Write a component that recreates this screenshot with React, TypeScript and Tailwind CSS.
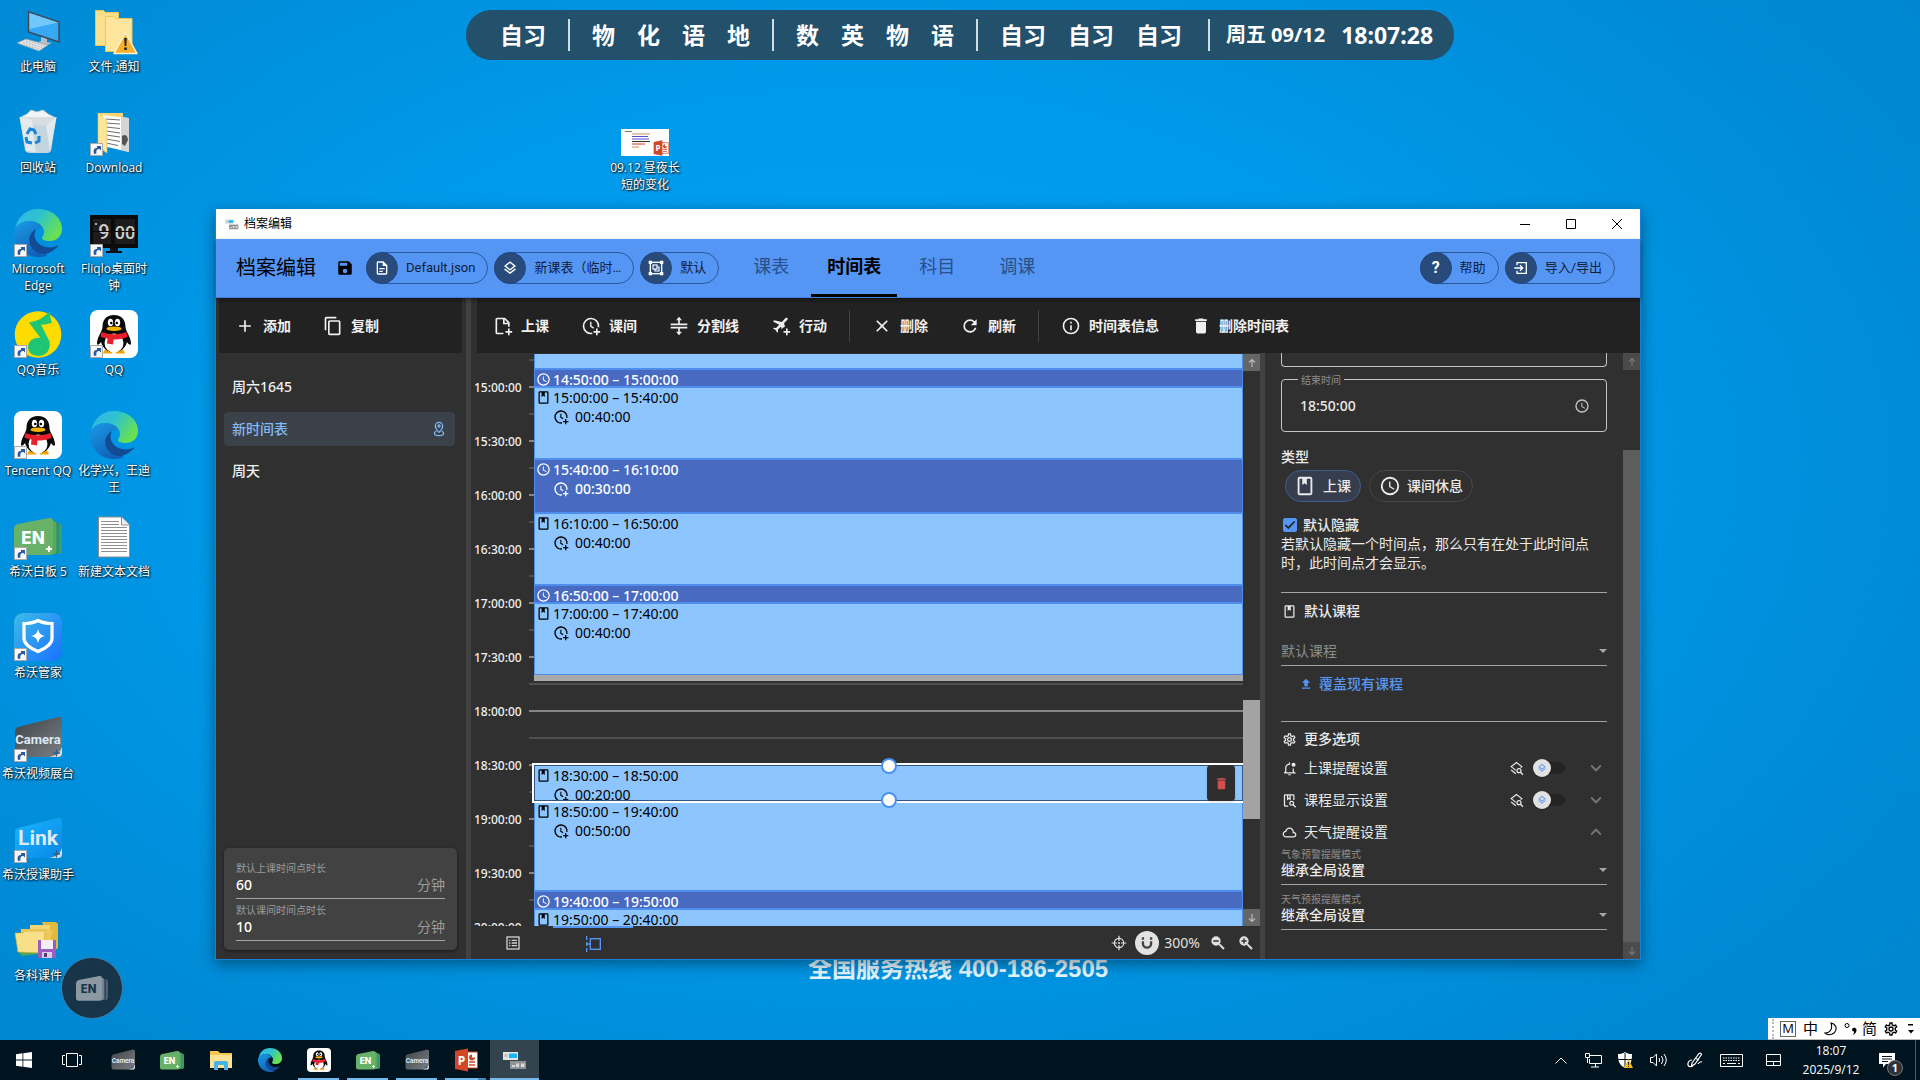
import React, { useState } from "react";

const UI_FONT = "font-['Noto_Sans','Noto_Sans_CJK_SC',sans-serif]";
const SYS_FONT = "font-['Open_Sans','Noto_Sans_CJK_SC',sans-serif]";

/* ---------- line icons ---------- */

const PATHS = {
  plus: "M19,13H13V19H11V13H5V11H11V5H13V11H19V13Z",
  copy: "M19,21H8V7H19M19,5H8A2,2 0 0,0 6,7V21A2,2 0 0,0 8,23H19A2,2 0 0,0 21,21V7A2,2 0 0,0 19,5M16,1H4A2,2 0 0,0 2,3V17H4V3H16V1Z",
  file: "M6,2A2,2 0 0,0 4,4V20A2,2 0 0,0 6,22H18A2,2 0 0,0 20,20V8L14,2H6M6,4H13V9H18V20H6V4M8,12V14H16V12H8M8,16V18H13V16H8Z",
  layers:
    "M12,18.54L19.37,12.8L21,14.07L12,21.07L3,14.07L4.62,12.81L12,18.54M12,16L3,9L12,2L21,9L12,16M12,4.53L6.26,9L12,13.47L17.74,9L12,4.53Z",
  clock:
    "M12,20A8,8 0 0,0 20,12A8,8 0 0,0 12,4A8,8 0 0,0 4,12A8,8 0 0,0 12,20M12,2A10,10 0 0,1 22,12A10,10 0 0,1 12,22C6.47,22 2,17.5 2,12A10,10 0 0,1 12,2M12.5,7V12.25L17,14.92L16.25,16.15L11,13V7H12.5Z",
  save: "M15,9H5V5H15M12,19A3,3 0 0,1 9,16A3,3 0 0,1 12,13A3,3 0 0,1 15,16A3,3 0 0,1 12,19M17,3H5C3.89,3 3,3.9 3,5V19A2,2 0 0,0 5,21H19A2,2 0 0,0 21,19V7L17,3Z",
  trash: "M19,4H15.5L14.5,3H9.5L8.5,4H5V6H19M6,19A2,2 0 0,0 8,21H16A2,2 0 0,0 18,19V7H6V19Z",
  close:
    "M19,6.41L17.59,5L12,10.59L6.41,5L5,6.41L10.59,12L5,17.59L6.41,19L12,13.41L17.59,19L19,17.59L13.41,12L19,6.41Z",
  refresh:
    "M17.65,6.35C16.2,4.9 14.21,4 12,4A8,8 0 0,0 4,12A8,8 0 0,0 12,20C15.73,20 18.84,17.45 19.73,14H17.65C16.83,16.33 14.61,18 12,18A6,6 0 0,1 6,12A6,6 0 0,1 12,6C13.66,6 15.14,6.69 16.22,7.78L13,11H20V4L17.65,6.35Z",
  info: "M11,9H13V7H11M12,20C7.59,20 4,16.41 4,12C4,7.59 7.59,4 12,4C16.41,4 20,7.59 20,12C20,16.41 16.41,20 12,20M12,2A10,10 0 0,0 2,12A10,10 0 0,0 12,22A10,10 0 0,0 22,12A10,10 0 0,0 12,2M11,17H13V11H11V17Z",
  cloud:
    "M6.5 20Q4.22 20 2.61 18.43 1 16.85 1 14.58 1 12.63 2.17 11.1 3.35 9.57 5.25 9.15 5.88 6.85 7.75 5.43 9.63 4 12 4 14.93 4 16.96 6.04 19 8.07 19 11 20.73 11.2 21.86 12.5 23 13.78 23 15.5 23 17.38 21.69 18.69 20.38 20 18.5 20M6.5 18H18.5Q19.55 18 20.27 17.27 21 16.55 21 15.5 21 14.45 20.27 13.73 19.55 13 18.5 13H17V11Q17 8.93 15.54 7.46 14.08 6 12 6 9.93 6 8.46 7.46 7 8.93 7 11H6.5Q5.05 11 4.03 12.03 3 13.05 3 14.5 3 15.95 4.03 17 5.05 18 6.5 18Z",
  down: "M7.41,8.58L12,13.17L16.59,8.58L18,10L12,16L6,10L7.41,8.58Z",
  up: "M7.41,15.41L12,10.83L16.59,15.41L18,14L12,8L6,14L7.41,15.41Z",
  cog: "M12,8A4,4 0 0,1 16,12A4,4 0 0,1 12,16A4,4 0 0,1 8,12A4,4 0 0,1 12,8M12,10A2,2 0 0,0 10,12A2,2 0 0,0 12,14A2,2 0 0,0 14,12A2,2 0 0,0 12,10M10,22C9.75,22 9.54,21.82 9.5,21.58L9.13,18.93C8.5,18.68 7.96,18.34 7.44,17.94L4.95,18.95C4.73,19.03 4.46,18.95 4.34,18.73L2.34,15.27C2.21,15.05 2.27,14.78 2.46,14.63L4.57,12.97L4.5,12L4.57,11L2.46,9.37C2.27,9.22 2.21,8.95 2.34,8.73L4.34,5.27C4.46,5.05 4.73,4.96 4.95,5.05L7.44,6.05C7.96,5.66 8.5,5.32 9.13,5.07L9.5,2.42C9.54,2.18 9.75,2 10,2H14C14.25,2 14.46,2.18 14.5,2.42L14.87,5.07C15.5,5.32 16.04,5.66 16.56,6.05L19.05,5.05C19.27,4.96 19.54,5.05 19.66,5.27L21.66,8.73C21.79,8.95 21.73,9.22 21.54,9.37L19.43,11L19.5,12L19.43,13L21.54,14.63C21.73,14.78 21.79,15.05 21.66,15.27L19.66,18.73C19.54,18.95 19.27,19.04 19.05,18.95L16.56,17.95C16.04,18.34 15.5,18.68 14.87,18.93L14.5,21.58C14.46,21.82 14.25,22 14,22H10M11.25,4L10.88,6.61C9.68,6.86 8.62,7.5 7.85,8.39L5.44,7.35L4.69,8.65L6.8,10.2C6.4,11.37 6.4,12.64 6.8,13.8L4.68,15.36L5.43,16.66L7.86,15.62C8.63,16.5 9.68,17.14 10.87,17.38L11.24,20H12.76L13.13,17.39C14.32,17.14 15.37,16.5 16.14,15.62L18.57,16.66L19.32,15.36L17.2,13.81C17.6,12.64 17.6,11.37 17.2,10.2L19.31,8.65L18.56,7.35L16.15,8.39C15.38,7.5 14.32,6.86 13.12,6.62L12.75,4H11.25Z",
  zoomOut:
    "M9,2A7,7 0 0,1 16,9C16,10.57 15.5,12 14.61,13.19L15.41,14H16L22,20L20,22L14,16V15.41L13.19,14.61C12,15.5 10.57,16 9,16A7,7 0 0,1 2,9A7,7 0 0,1 9,2M5,8V10H13V8H5Z",
  zoomIn:
    "M9,2A7,7 0 0,1 16,9C16,10.57 15.5,12 14.61,13.19L15.41,14H16L22,20L20,22L14,16V15.41L13.19,14.61C12,15.5 10.57,16 9,16A7,7 0 0,1 2,9A7,7 0 0,1 9,2M8,5V8H5V10H8V13H10V10H13V8H10V5H8Z",
  upload: "M9,16V10H5L12,3L19,10H15V16H9M5,20V18H19V20H5Z",
};

function Icon({ name, className = "" }: { name: keyof typeof PATHS; className?: string }) {
  return (
    <svg viewBox="0 0 24 24" fill="currentColor" fillRule="evenodd" className={"shrink-0 " + className} aria-hidden="true">
      <path d={PATHS[name]} />
    </svg>
  );
}

function Stroke({ className = "", width = 2, children }: { className?: string; width?: number; children: React.ReactNode }) {
  return (
    <svg viewBox="0 0 24 24" fill="none" stroke="currentColor" strokeWidth={width} className={"shrink-0 " + className} aria-hidden="true">
      {children}
    </svg>
  );
}

const BookIcon = ({ className }: { className?: string }) => (
  <Stroke className={className}>
    <rect x="5" y="3" width="14" height="18" rx="1" />
    <path d="M9 3h5v8l-2.500-2L9 11z" fill="currentColor" stroke="none" />
  </Stroke>
);
const FilePlusIcon = ({ className }: { className?: string }) => (
  <Stroke className={className}>
    <path d="M12.500 21H5a1 1 0 0 1-1-1V4a1 1 0 0 1 1-1h9l5 5v5" />
    <path d="M13 3v6h6M19 15v8M15 19h8" />
  </Stroke>
);
const ClockPlusIcon = ({ className }: { className?: string }) => (
  <Stroke className={className}>
    <path d="M13.500 20.900A9 9 0 1 1 20.900 13.500" />
    <path d="M11.750 7v5.500l3.500 2" strokeWidth="1.600" />
    <path d="M19 15v8M15 19h8" />
  </Stroke>
);
const DivideIcon = ({ className }: { className?: string }) => (
  <Stroke className={className}>
    <path d="M2 10h20M2 14h20M12 3.500V10M12 14v6.500" />
    <path d="M8.500 5 12 1l3.500 4zM8.500 19l3.500 4 3.500-4z" fill="currentColor" stroke="none" />
  </Stroke>
);
const PlanePlusIcon = ({ className }: { className?: string }) => (
  <svg viewBox="0 0 24 24" fill="currentColor" className={"shrink-0 " + (className ?? "")} aria-hidden="true">
    <path d="M19.600 2.400c.600.600.600 1.500 0 2.100l-3.900 3.900 1 4.400c-1.700.500-3.100 1.700-3.900 3.200l-.800-3.400-3.900 3.900.400 2.500-1.100 1L5.600 16.800 2.400 15l1.100-1 2.500.400 3.900-3.900L2.400 6.600l1.400-1.400L13 7.300l4.500-4.900c.600-.600 1.500-.600 2.100 0z" />
    <path d="M18 15h2v3h3v2h-3v3h-2v-3h-3v-2h3z" />
  </svg>
);
const PinIcon = ({ className }: { className?: string }) => (
  <Stroke className={className} width={1.800}>
    <path d="M12 17s-5.500-5-5.500-9.500a5.500 5.500 0 0 1 11 0C17.500 12 12 17 12 17z" />
    <circle cx="12" cy="7.500" r="1.600" />
    <path d="M8 15.500c-2 .600-3 1.600-3 3 0 2 3 3.500 7 3.500s7-1.500 7-3.500c0-1.400-1-2.400-3-3" />
  </Stroke>
);
const BellIcon = ({ className }: { className?: string }) => (
  <Stroke className={className} width={1.900}>
    <path d="M3.500 19h17L18 17v-5M13 5.100A6 6 0 0 0 6 11v6l-2.500 2M10 22h4M12 2.500V5" />
    <circle cx="18.500" cy="6" r="3.200" fill="currentColor" stroke="none" />
  </Stroke>
);
const BookSearchIcon = ({ className }: { className?: string }) => (
  <Stroke className={className}>
    <path d="M10 21H5a1 1 0 0 1-1-1V4a1 1 0 0 1 1-1h13a1 1 0 0 1 1 1v7" />
    <path d="M9 3v7l2-1.500 2 1.500V3" />
    <circle cx="15.500" cy="16.500" r="3" />
    <path d="m17.800 18.800 4 4" />
  </Stroke>
);
const LayersSearchIcon = ({ className }: { className?: string }) => (
  <Stroke className={className} width={1.900}>
    <path d="M11 15 3.500 9 12 2.500 20.500 9l-2 1.500M3.500 14.500 11 20.500" />
    <circle cx="16" cy="15.500" r="3.200" />
    <path d="m18.300 18 4 4" />
  </Stroke>
);
const GroupIcon = ({ className }: { className?: string }) => (
  <Stroke className={className}>
    <rect x="3.500" y="3.500" width="17" height="17" />
    <rect x="7.500" y="7.500" width="6" height="6" strokeWidth="1.700" />
    <path d="M13.500 10.500h3v6h-6v-3" strokeWidth="1.700" />
    <path d="M1 1h5v5H1zM18 1h5v5h-5zM1 18h5v5H1zM18 18h5v5h-5z" fill="currentColor" stroke="none" />
  </Stroke>
);
const ImportIcon = ({ className }: { className?: string }) => (
  <Stroke className={className}>
    <path d="M6 8V4h14v16H6v-4M2 12h12M10.500 8l4 4-4 4" />
  </Stroke>
);
const TargetIcon = ({ className }: { className?: string }) => (
  <Stroke className={className} width={1.800}>
    <circle cx="12" cy="12" r="7" />
    <path d="M12 1v8M12 15v8M1 12h8M15 12h8M12 10.500v3M10.500 12h3" />
  </Stroke>
);
const MagnetIcon = ({ className }: { className?: string }) => (
  <Stroke className={className} width={4}>
    <path d="M5 9v4a7 7 0 0 0 14 0V9M5 2v4.500M19 2v4.500" />
  </Stroke>
);
const ArrowIcon = ({ up, className }: { up?: boolean; className?: string }) => (
  <Stroke className={className} width={2.400}>
    <path d={up ? "M12 20V5M6 11l6-6 6 6" : "M12 4v15M6 13l6 6 6-6"} />
  </Stroke>
);

/* ---------- picture icons ---------- */

const ShortcutMark = () => (
  <svg viewBox="0 0 13 13" className="absolute bottom-0 left-0 size-[13px]" aria-hidden="true">
    <path d="M.5.5h12v12H.5z" fill="#f8f8f8" stroke="#a9a9a9" />
    <path d="M4 11c-1-4 0-6 3-6V3h4v4.500L9.500 6C6.500 6 6 8 6.500 10.500z" fill="#2b5a9f" />
  </svg>
);

const EdgeLogo = ({ className = "size-12", id }: { className?: string; id: string }) => (
  <svg viewBox="0 0 48 48" className={className} aria-hidden="true">
    <defs>
      <linearGradient id={id + "a"} x1="0" y1="0" x2="1" y2=".5">
        <stop offset="0" stopColor="#35b5ee" />
        <stop offset=".5" stopColor="#2cc3cf" />
        <stop offset="1" stopColor="#68e052" />
      </linearGradient>
      <linearGradient id={id + "b"} x1="0" y1="0" x2=".6" y2="1">
        <stop offset="0" stopColor="#1a9be6" />
        <stop offset="1" stopColor="#1160b7" />
      </linearGradient>
    </defs>
    <path d="M1 21C3 8 12 0 24 0c14 0 24 9 24 20 0 8-6 12-12 12-5 0-8-1-8-3 0-1 2-3 2-6 0-6-6-11-14-11C9 12 3 15 1 21z" fill={"url(#" + id + "a)"} />
    <path d="M0 24c0-7 7-12 15-12 6 0 11 3 13 7-6-1-10 3-10 9 0 9 7 16 16 18-3 1.500-6 2-10 2C11 48 0 38 0 24z" fill={"url(#" + id + "b)"} />
    <path d="M22 20c-7 4-9 12-4 19 6 8 17 9 27-3-9 5-21 2-24-7-1-3-.5-6 1-9z" fill="#124a94" />
  </svg>
);

const QQLogo = ({ className = "size-12" }: { className?: string }) => (
  <svg viewBox="0 0 48 48" className={className} aria-hidden="true">
    <rect width="48" height="48" rx="8" fill="#fff" />
    <path d="M14 41c2-3 5-3 9 0l-1 2.500h-9zM34 41c-2-3-5-3-9 0l1 2.500h9z" fill="#f5a600" />
    <path d="M24 5c-8 0-11.500 5-11.500 12 0 4-5 9-5.500 16 0 3 2 2 4-1 2 7 7 10 13 10s11-3 13-10c2 3 4 4 4 1-.500-7-5.500-12-5.500-16C35.500 10 32 5 24 5z" fill="#0a0a0a" />
    <ellipse cx="24" cy="33" rx="9.500" ry="9.500" fill="#fff" />
    <path d="M11.500 22c8 3 17 3 25 0l1 5c-5 2-9 2.500-14 2.500l-.500 5-6-1 .500-5c-3-.500-5-1-7-2z" fill="#e8202c" />
    <ellipse cx="20.500" cy="12.500" rx="2.700" ry="3.800" fill="#fff" />
    <ellipse cx="27.500" cy="12.500" rx="2.700" ry="3.800" fill="#fff" />
    <circle cx="21.300" cy="13" r="1.300" />
    <circle cx="26.800" cy="13" r="1.300" />
    <ellipse cx="24" cy="18.700" rx="7.500" ry="2.300" fill="#f7b500" />
  </svg>
);

const EnLogo = ({ className = "size-12", muted = false }: { className?: string; muted?: boolean }) => (
  <svg viewBox="0 0 48 48" className={className} aria-hidden="true">
    <path d="M30 8l15 3q3 1 3 3v24q0 4-4 4H30z" fill={muted ? "#4c6271" : "#3c9b6f"} />
    <path d="M30 7l12 2q2.500 1 2.500 3v27q0 3-4 3H30z" fill={muted ? "#0f2a3c" : "#128a8c"} opacity=".6" />
    <path d="M30 7l10 2q2.500 1 2.500 3v27q0 3-3 3H30z" fill={muted ? "#72838f" : "#59a85a"} />
    <path d="M4 12 35 6q4-.500 4 3v31q0 3-3 3H4q-4 0-4-4V17q0-4 4-5z" fill={muted ? "#8c99a3" : "#67b168"} />
    <text x="19" y="32" textAnchor="middle" fontFamily="Inter, sans-serif" fontWeight="800" fontSize="17" fill={muted ? "#173449" : "#fff"}>
      EN
    </text>
    {!muted && <path d="M32 37h6M35 34v6" stroke="#fff" strokeWidth="1.800" />}
  </svg>
);

const CardLogo = ({ word, id, className = "size-12", from, to, size }: { word: string; id: string; className?: string; from: string; to: string; size: number }) => (
  <svg viewBox="0 0 48 48" className={className} aria-hidden="true">
    <defs>
      <linearGradient id={id} x1="0" y1="0" x2="1" y2="1">
        <stop offset="0" stopColor={from} />
        <stop offset="1" stopColor={to} />
      </linearGradient>
    </defs>
    <path d="M4 13 44 3q4-.500 4 3v33q0 4-4 4H5q-4 0-4-4V18q0-4 3-5z" fill={"url(#" + id + ")"} />
    <path d="M35 43c7-1 11-4 13-10v6q0 4-4 4z" fill="#d9dde0" />
    <path d="M39 39h7M42.500 35.500v7" stroke="#355d80" strokeWidth="1.300" />
    <text x="24" y="30" textAnchor="middle" fontFamily="Roboto, sans-serif" fontWeight="700" fontSize={size} fill="#dfe9f1">
      {word}
    </text>
  </svg>
);
const CameraLogo = ({ className, id }: { className?: string; id: string }) => (
  <CardLogo word="Camera" id={id} from="#3f4449" to="#7b8085" size={13} className={className} />
);

const PptLogo = ({ className }: { className?: string }) => (
  <svg viewBox="0 0 24 24" className={className} aria-hidden="true">
    <path d="M13 4h10.500v16H13z" fill="#fff" stroke="#d24726" />
    <path d="M15 14h6M15 17h6" stroke="#d24726" strokeWidth="1.300" />
    <path d="M18 6.500a3 3 0 1 0 3 3h-3z" fill="#d24726" />
    <path d="M1 3 14 .5v23L1 21z" fill="#d24726" />
    <text x="7.500" y="16.500" textAnchor="middle" fontFamily="'Open Sans', sans-serif" fontWeight="700" fontSize="12" fill="#fff">
      P
    </text>
  </svg>
);

const PcLogo = () => (
  <svg viewBox="0 0 48 48" className="size-12" aria-hidden="true">
    <path d="M14.500 5 45 15v20L14.500 25z" fill="#37a9f4" stroke="#3b4a55" strokeWidth="1.400" />
    <path d="M15.500 6 44 15.500 15.500 22z" fill="#73c8fb" />
    <path d="M27 30l6 2v3l5 1-7 3-9-3 5-2z" fill="#b8bec3" />
    <path d="M3 36 12 32l22 6-9 6z" fill="#e3e6e8" stroke="#9aa1a6" strokeWidth=".8" />
    <path d="M6 37l20 5M9 35.500l20 5M12 34l20 5" stroke="#a8afb4" strokeWidth=".8" strokeDasharray="2 1" />
  </svg>
);
const BinLogo = () => (
  <svg viewBox="0 0 48 48" className="size-12" aria-hidden="true">
    <path d="M7 9l6-3 4-4 6 2 6-2 5 4 8 4-4 7H10z" fill="#f1f3f4" stroke="#c6ccd0" strokeWidth=".8" />
    <path d="M5.500 9h37L37 43q-1 2-4 2H16q-4 0-5-3z" fill="#d6dbde" opacity=".92" />
    <path d="M5.500 9 12 43l10 1-4-32zM42.500 9 32 18l4 25z" fill="#eef1f2" opacity=".7" />
    <path d="m13 26 3-5 4 1 2 4M12 29l1 5 5 1M21 35l4-2v-5" fill="none" stroke="#1b83d8" strokeWidth="3" />
  </svg>
);
const FoldersLogo = () => (
  <svg viewBox="0 0 48 48" className="size-12" aria-hidden="true">
    <path d="M5.500 3.500h8l2 2h13v33h-23z" fill="#fbe08b" stroke="#eec75a" />
    <path d="M15.500 9.500h8l2 2h16.500v33H15.500z" fill="#fde69b" stroke="#eec75a" />
    <path d="M35.500 26 47 46.500H24z" fill="#f9b02d" stroke="#fff3d0" strokeWidth="1.500" strokeLinejoin="round" />
    <path d="M34.200 31h2.600l-.5 8h-1.600zM34.200 40.500h2.600v2.600h-2.600z" fill="#222" />
  </svg>
);
const DownloadLogo = () => (
  <svg viewBox="0 0 48 48" className="size-12" aria-hidden="true">
    <path d="M8 5h25v34H8z" fill="#f6d571" />
    <path d="M13 7l26 3v34l-26-6z" fill="#fff" />
    <path d="M16 11l14 1M16 15l14 1M16 19l14 1.500M16 23l14 2M16 27l14 2M16 31l14 2.500M16 35l12 2.500" stroke="#6e6e6e" strokeWidth="1" />
    <path d="M31 9l8 1v34l-8-2z" fill="#d5d5d5" />
    <path d="M32 28q5-3 6 4l-3 6-3-2z" fill="#555" />
    <path d="M8 5l9 8v32l-9-6z" fill="#fde59a" stroke="#e9c257" strokeWidth=".6" />
  </svg>
);
const FliqloLogo = () => (
  <svg viewBox="0 0 48 48" className="size-12" aria-hidden="true">
    <path d="M0 6h48v33H0z" fill="#0b0b0b" />
    <path d="M20 39h8v3h4v2H16v-2h4z" fill="#111" />
    <path d="M3 10h18v25H3zM25 10h20v25H25z" fill="#1c1c1c" />
    <text x="14" y="30" textAnchor="middle" fontFamily="Roboto, sans-serif" fontWeight="500" fontSize="20" fill="#cfcfcf">
      9
    </text>
    <text x="35" y="30" textAnchor="middle" fontFamily="Roboto, sans-serif" fontWeight="500" fontSize="18" fill="#cfcfcf">
      00
    </text>
    <path d="M0 22.500h48" stroke="#0b0b0b" />
    <circle cx="6" cy="15" r="1" fill="#ddd" />
  </svg>
);
const MusicLogo = () => (
  <svg viewBox="0 0 48 48" className="size-12" aria-hidden="true">
    <circle cx="24" cy="24.500" r="23.300" fill="#ffdc00" />
    <path d="M15 12.500c9-1.500 15-5 21-11.500q-.500 6 2 12c-4 1-8 2-11 1.500l8.500 17c1.500 9-4 14.500-10.500 14.500-7 0-11-4-11-9 0-6 6-10 12.500-9z" fill="#20c573" />
  </svg>
);
const TxtLogo = () => (
  <svg viewBox="0 0 48 48" className="size-12" aria-hidden="true">
    <path d="M8.500 5h23l8 8v32h-31z" fill="#fff" stroke="#8d8d8d" />
    <path d="M31.500 5v8h8" fill="#eee" stroke="#8d8d8d" />
    <path d="M11 9.500h18M11 12.500h18M11 15.500h26M11 18.500h26M11 21.500h26M11 24.500h26M11 27.500h26M11 30.500h26M11 33.500h26M11 36.500h26M11 39.500h26" stroke="#8f8f8f" strokeWidth="1.100" />
  </svg>
);
const ShieldLogo = () => (
  <svg viewBox="0 0 48 48" className="size-12" aria-hidden="true">
    <defs>
      <linearGradient id="shield" x1="0" y1="0" x2="1" y2="1">
        <stop offset="0" stopColor="#3cbbe8" />
        <stop offset="1" stopColor="#1a72ff" />
      </linearGradient>
    </defs>
    <rect width="48" height="48" rx="9" fill="url(#shield)" />
    <path d="M24 7.500c4 2 9 3 14 3v15c0 6-7 10-14 13-7-3-14-7-14-13v-15c5 0 10-1 14-3z" fill="none" stroke="#fff" strokeWidth="3.200" />
    <path d="M24 16q1 6 7 7-6 1-7 7-1-6-7-7 6-1 7-7z" fill="#fff" />
  </svg>
);
const FolderDiskLogo = () => (
  <svg viewBox="0 0 48 48" className="size-12" aria-hidden="true">
    <path d="M28 6h14l2 2v24l-6 4z" fill="#e2b93f" />
    <path d="M16 9h20v24H16z" fill="#f3d673" />
    <path d="M2 34l40-8v10L8 40z" fill="#4da65a" />
    <path d="M7 13h26l6 2-6 20H7z" fill="#edc857" />
    <path d="M1 17h8l2-2h20l-2 22L4 36z" fill="#f8df8a" stroke="#d8ae3c" strokeWidth=".6" />
    <path d="M24 24h18v18H24z" fill="#9a5cc0" />
    <path d="M27 24h12v9H27z" fill="#f2eef6" />
    <path d="M28 36h10v6H28z" fill="#d9cfe3" />
    <path d="M30 37h3v4h-3z" fill="#5c3a78" />
  </svg>
);
const AppLogo = ({ className }: { className?: string }) => (
  <svg viewBox="0 0 24 24" className={className} aria-hidden="true">
    <path d="M0 4h15v8H0z" fill="#e4e4e4" />
    <path d="M6 5.500h8V10H6z" fill="#19b6f5" />
    <path d="M1.500 6h3v3h-3z" fill="#bdbdbd" />
    <path d="M7 13h16v8H7z" fill="#8f9294" />
    <path d="M9 17h3v2H9zM13 15.500h3V19h-3zM18 15.500h3.500V19H18z" fill="#d9d9d9" />
  </svg>
);

/* ---------- desktop ---------- */

type Shortcut = { label: string; art: React.ReactNode; link?: boolean };

const COLUMN_ONE: Shortcut[] = [
  { label: "此电脑", art: <PcLogo /> },
  { label: "回收站", art: <BinLogo /> },
  { label: "Microsoft Edge", art: <EdgeLogo id="e1" />, link: true },
  { label: "QQ音乐", art: <MusicLogo />, link: true },
  { label: "Tencent QQ", art: <QQLogo />, link: true },
  { label: "希沃白板 5", art: <EnLogo />, link: true },
  { label: "希沃管家", art: <ShieldLogo />, link: true },
  { label: "希沃视频展台", art: <CameraLogo id="c1" />, link: true },
  { label: "希沃授课助手", art: <CardLogo word="Link" id="l1" from="#19b6ff" to="#0a86e6" size={21} />, link: true },
  { label: "各科课件", art: <FolderDiskLogo /> },
];
const COLUMN_TWO: Shortcut[] = [
  { label: "文件,通知", art: <FoldersLogo /> },
  { label: "Download", art: <DownloadLogo />, link: true },
  { label: "Fliqlo桌面时钟", art: <FliqloLogo />, link: true },
  { label: "QQ", art: <QQLogo />, link: true },
  { label: "化学兴，王迪王", art: <EdgeLogo id="e2" /> },
  { label: "新建文本文档", art: <TxtLogo /> },
];

function DesktopColumn({ items }: { items: Shortcut[] }) {
  return (
    <div className="flex w-[76px] flex-col">
      {items.map((item) => (
        <button key={item.label} className="flex h-[101px] flex-col items-center">
          <span className="relative size-12">
            {item.art}
            {item.link && <ShortcutMark />}
          </span>
          <span className="mt-[3px] w-[76px] text-center text-xs leading-[17px] text-white [text-shadow:1px_1px_2px_#000,0_0_2px_#000a]">{item.label}</span>
        </button>
      ))}
    </div>
  );
}

const LESSONS = [["自习"], ["物", "化", "语", "地"], ["数", "英", "物", "语"], ["自习", "自习", "自习"]];

function ScheduleBar() {
  return (
    <div className={UI_FONT + " absolute inset-x-0 top-[10px] flex justify-center"}>
      <div className="flex h-[50px] items-center rounded-[25px] bg-[#23506a] pl-[34px] pr-[21px] font-bold text-white">
        {LESSONS.map((group, g) => (
          <React.Fragment key={g}>
            <div className="flex gap-[22px] text-[23px]">
              {group.map((l, i) => (
                <span key={i}>{l}</span>
              ))}
            </div>
            <span className={(g === 3 ? "ml-[26px] mr-4" : "mx-[22px]") + " h-8 w-0.5 bg-[#d3dce1]"} />
          </React.Fragment>
        ))}
        <span className="text-[20px]">周五 09/12</span>
        <span className="ml-4 text-[23px]">18:07:28</span>
      </div>
    </div>
  );
}

/* ---------- window header ---------- */

function Chip({ icon, children }: { icon: React.ReactNode; children: React.ReactNode }) {
  return (
    <button className="flex h-8 items-center rounded-full border border-[#2e5796] pr-3 font-['Roboto','Noto_Sans_CJK_SC',sans-serif] text-[13px] text-[#10203a]">
      <span className="-ml-px flex size-8 shrink-0 items-center justify-center rounded-full border border-[#23477c] bg-[#294b7c] text-white">{icon}</span>
      <span className="ml-2 whitespace-nowrap">{children}</span>
    </button>
  );
}

function Header() {
  const tabs = ["课表", "时间表", "科目", "调课"];
  return (
    <header className="relative z-10 flex h-[59px] shrink-0 items-center border-b border-[#3f7fdc] bg-[#5596f5] pl-5 pr-[25px] shadow-[0_2px_4px_rgba(0,0,0,0.4)]">
      <h1 className="text-[20px] text-black">档案编辑</h1>
      <button aria-label="保存" className="ml-5 mr-3 text-black">
        <Icon name="save" className="size-[18px]" />
      </button>
      <div className="flex gap-1.5">
        <Chip icon={<Icon name="file" className="size-4" />}>Default.json</Chip>
        <Chip icon={<Icon name="layers" className="size-4" />}>新课表（临时…</Chip>
        <Chip icon={<GroupIcon className="size-4" />}>默认</Chip>
      </div>
      <nav className="ml-3 flex self-stretch">
        {tabs.map((t) => (
          <button
            key={t}
            className={
              "min-w-20 border-b-[3px] px-4 text-[18px] " + (t === "时间表" ? "border-black font-bold text-black" : "border-transparent text-[#27508c]")
            }
          >
            {t}
          </button>
        ))}
      </nav>
      <div className="ml-auto flex gap-1.5">
        <Chip icon={<span className="text-base font-bold">?</span>}>帮助</Chip>
        <Chip icon={<ImportIcon className="size-4" />}>导入/导出</Chip>
      </div>
    </header>
  );
}

function ToolButton({ icon, children }: { icon: React.ReactNode; children: string }) {
  return (
    <button className="flex h-full items-center gap-2 whitespace-nowrap px-4 text-sm font-bold">
      {icon}
      {children}
    </button>
  );
}
const ToolDivider = () => <span className="mx-1.5 h-8 w-px bg-[#444]" />;

/* ---------- left list ---------- */

function DurationField({ id, label, value }: { id: string; label: string; value: string }) {
  return (
    <div className="border-b border-[#a5a5a5] pb-0.5">
      <label htmlFor={id} className="block text-[10px] leading-3 text-[#9c9c9c]">
        {label}
      </label>
      <div className="flex h-[22px] items-center text-sm">
        <input id={id} defaultValue={value} className="min-w-0 flex-1 bg-transparent font-medium text-white outline-none" />
        <span className="text-[#9c9c9c]">分钟</span>
      </div>
    </div>
  );
}

function SidePanel() {
  return (
    <aside className="flex w-[250px] shrink-0 flex-col pl-[3px]">
      <div className="mr-1 flex h-[55px] shrink-0 bg-[#222]">
        <ToolButton icon={<Icon name="plus" className="size-5" />}>添加</ToolButton>
        <ToolButton icon={<Icon name="copy" className="size-5" />}>复制</ToolButton>
      </div>
      <ul className="ml-[5px] mr-[11px] mt-[17px] flex flex-col gap-2 text-sm font-medium">
        <li className="flex h-[34px] items-center px-2">周六1645</li>
        <li className="flex h-[34px] items-center justify-between rounded bg-[#3b4149] px-2 text-[#84b9f5]">
          新时间表
          <PinIcon className="size-4" />
        </li>
        <li className="flex h-[34px] items-center px-2">周天</li>
      </ul>
      <div className="mb-[9px] ml-[5px] mr-[9px] mt-auto flex flex-col gap-[5px] rounded-[5px] bg-[#424242] px-3 pb-[9px] pt-3.5 shadow-[0_1px_3px_rgba(0,0,0,0.5)]">
        <DurationField id="lesson-len" label="默认上课时间点时长" value="60" />
        <DurationField id="break-len" label="默认课间时间点时长" value="10" />
      </div>
    </aside>
  );
}

/* ---------- timeline ---------- */

const PX_PER_MIN = 1.8;
const ORIGIN = 15 * 60 - 33 / PX_PER_MIN;
const yOf = (min: number) => Math.round((min - ORIGIN) * PX_PER_MIN);
const fmt = (min: number) => String(Math.floor(min / 60)).padStart(2, "0") + ":" + String(min % 60).padStart(2, "0") + ":00";

type Slot = { from: number; to: number; rest?: boolean; selected?: boolean };
const SLOTS: Slot[] = [
  { from: 850, to: 890 },
  { from: 890, to: 900, rest: true },
  { from: 900, to: 940 },
  { from: 940, to: 970, rest: true },
  { from: 970, to: 1010 },
  { from: 1010, to: 1020, rest: true },
  { from: 1020, to: 1060 },
  { from: 1130, to: 1180 },
  { from: 1180, to: 1190, rest: true },
  { from: 1190, to: 1240 },
  { from: 1110, to: 1130, selected: true },
];
const TICKS = Array.from({ length: 22 }, (_, i) => 885 + i * 15);

function SlotBlock({ slot }: { slot: Slot }) {
  const visible = yOf(slot.from) >= 0;
  const long = slot.to - slot.from > 10 && slot.to < 1200;
  return (
    <div
      className={
        "absolute inset-x-0 border " +
        (slot.rest ? "border-[#4f8cf0] bg-[#486ac0] font-medium text-white" : "border-[#4f8fe8] bg-[#8cc5ff] text-black") +
        (slot.selected ? " outline-2 outline-white border-[#34557f]" : "")
      }
      style={{ top: yOf(slot.from), height: (slot.to - slot.from) * PX_PER_MIN }}
    >
      {visible && (
        <div className="h-full overflow-hidden pl-px text-sm leading-[19px]">
          <div className="flex items-center gap-0.5">
            {slot.rest ? <Icon name="clock" className="size-[15px]" /> : <BookIcon className="size-[15px]" />}
            {fmt(slot.from)} – {fmt(slot.to)}
          </div>
          {long && (
            <div className="ml-[17px] flex items-center gap-1.5">
              <ClockPlusIcon className="size-4" />
              {fmt(slot.to - slot.from)}
            </div>
          )}
        </div>
      )}
      {slot.selected && (
        <>
          <span className="absolute -top-2 left-1/2 -ml-2 size-4 rounded-full border-2 border-[#4a90f0] bg-white" />
          <span className="absolute -bottom-2 left-1/2 -ml-2 size-4 rounded-full border-2 border-[#4a90f0] bg-white" />
          <button aria-label="删除时间点" className="absolute -inset-y-px right-[7px] flex w-7 items-center justify-center rounded bg-[#2e2e2e] shadow">
            <Icon name="trash" className="size-[15px] text-[#d05050]" />
          </button>
        </>
      )}
    </div>
  );
}

function Timeline() {
  return (
    <div className="flex min-h-0 flex-1">
      <div className="relative flex-1 overflow-hidden">
        {TICKS.map((t) => (
          <React.Fragment key={t}>
            <span
              className={"absolute left-[58px] right-0 h-0.5 " + (t % 30 === 0 ? "bg-[#868686]" : "bg-[#4f4f4f]")}
              style={{ top: yOf(t) - 1 }}
            />
            {t % 30 === 0 && (
              <span className="absolute left-[3px] text-xs font-medium leading-4" style={{ top: yOf(t) - 7 }}>
                {fmt(t)}
              </span>
            )}
          </React.Fragment>
        ))}
        <div className="absolute inset-y-0 left-[63px] right-0">
          <span className="absolute inset-x-0 h-1.5 bg-[#a9a9a9]" style={{ top: yOf(1060) }} />
          {SLOTS.map((s) => (
            <SlotBlock key={s.from} slot={s} />
          ))}
        </div>
      </div>
      <div className="flex w-[17px] shrink-0 flex-col">
        <button aria-label="向上滚动" className="flex h-[17px] items-center justify-center bg-[#666] text-[#bbb]">
          <ArrowIcon up className="size-3" />
        </button>
        <span className="basis-[329px]" />
        <span className="h-[119px] bg-[#a3a3a3]" />
        <button aria-label="向下滚动" className="mt-auto flex h-[17px] items-center justify-center bg-[#666] text-[#bbb]">
          <ArrowIcon className="size-3" />
        </button>
      </div>
    </div>
  );
}

function TimelineFooter() {
  return (
    <div className="flex h-[33px] shrink-0 items-center">
      <button aria-label="列表视图" className="ml-0.5 flex h-full w-20 items-center justify-center text-[#d0d0d0]">
        <Stroke className="size-4">
          <rect x="3" y="3" width="18" height="18" />
          <path d="M6 8h2M10 8h8M6 12h2M10 12h8M6 16h2M10 16h8" />
        </Stroke>
      </button>
      <button aria-label="时间轴视图" className="flex h-full w-20 items-center justify-center border-t-2 border-[#5596f5] text-[#5596f5]">
        <Stroke className="size-4">
          <path d="M2.500 0v6M2.500 9v6M2.500 18v6M2 12h6" />
          <rect x="8" y="4" width="15" height="16" />
        </Stroke>
      </button>
      <div className="ml-auto flex items-center pr-[6px] text-[#e0e0e0]">
        <button aria-label="定位">
          <TargetIcon className="size-4" />
        </button>
        <button aria-label="吸附" className="ml-2 flex size-6 items-center justify-center rounded-full bg-[#e2e2e2] text-[#444]">
          <MagnetIcon className="size-3.5" />
        </button>
        <span className="ml-[5px] text-sm">300%</span>
        <button aria-label="缩小" className="ml-2.5">
          <Icon name="zoomOut" className="size-4" />
        </button>
        <button aria-label="放大" className="ml-3">
          <Icon name="zoomIn" className="size-4" />
        </button>
      </div>
    </div>
  );
}

/* ---------- inspector ---------- */

function Picker({ id, label, value }: { id: string; label?: string; value: string }) {
  return (
    <div className="relative border-b border-[#a5a5a5] pb-1">
      {label && (
        <label htmlFor={id} className="block text-[10px] leading-3 text-[#8d8d8d]">
          {label}
        </label>
      )}
      <select
        id={id}
        aria-label={label ?? value}
        className={"block h-5 w-full appearance-none bg-transparent text-sm leading-5 outline-none " + (label ? "font-medium" : "text-[#8d8d8d]")}
      >
        <option>{value}</option>
      </select>
      <span className="pointer-events-none absolute bottom-3 right-0 border-x-4 border-t-4 border-x-transparent border-t-[#a5a5a5]" />
    </div>
  );
}

function OptionRow({ icon, title, toggle, open }: { icon: React.ReactNode; title: string; toggle?: boolean; open?: boolean }) {
  return (
    <div className="flex h-8 items-center pl-px pr-1 text-sm">
      {icon}
      <span className="ml-[7px] mr-auto">{title}</span>
      {toggle && (
        <>
          <LayersSearchIcon className="size-[15px]" />
          <span className="relative ml-[9px] mr-5 flex h-5 w-8 items-center">
            <input type="checkbox" role="switch" aria-label={title} className="ml-1 h-3 w-7 appearance-none rounded-full bg-[#242424]" />
            <span className="pointer-events-none absolute left-0 flex size-[18px] items-center justify-center rounded-full bg-[#e2e2e2] text-[#5596f5] shadow">
              <Icon name="layers" className="size-2.5" />
            </span>
          </span>
        </>
      )}
      <button aria-label={"展开" + title} className="text-[#777]">
        <Icon name={open ? "up" : "down"} className="size-[22px] -mr-1" />
      </button>
    </div>
  );
}

function Inspector() {
  const [hidden, setHidden] = useState(true);
  return (
    <section className="flex w-[375px] shrink-0">
      <div className="min-w-0 flex-1 overflow-hidden pl-4 pr-4 text-[#eaeaea]">
        <div className="h-3.5 rounded-b border border-t-0 border-[#c4c4c4]" />
        <div className="relative mt-3 flex h-[53px] items-center rounded border border-[#c4c4c4] pl-[18px] pr-4">
          <label htmlFor="end" className="absolute -top-[6px] left-4 bg-[#303030] px-[3px] text-[10px] leading-3 text-[#8d8d8d]">
            结束时间
          </label>
          <input id="end" defaultValue="18:50:00" className="min-w-0 flex-1 bg-transparent text-sm font-medium outline-none" />
          <Icon name="clock" className="size-4 text-[#c4c4c4]" />
        </div>
        <h2 className="mt-[15px] text-sm font-medium leading-5">类型</h2>
        <div className="ml-1 mt-[3px] flex gap-2 text-sm font-medium">
          <button className="flex h-8 items-center gap-[7px] rounded-full border border-[#3e5c8c] bg-[#363e4e] pl-2 pr-[9px]">
            <BookIcon className="size-[22px]" />
            上课
          </button>
          <button className="flex h-8 items-center gap-[6px] rounded-full border border-[#464646] pl-[9px] pr-[9px]">
            <Icon name="clock" className="size-[22px]" />
            课间休息
          </button>
        </div>
        <label className="mt-[13px] flex h-[19px] items-center text-sm font-medium">
          <span className="relative ml-0.5 mr-1.5 size-[14px]">
            <input
              type="checkbox"
              checked={hidden}
              onChange={() => setHidden(!hidden)}
              className="block size-[14px] appearance-none rounded-[2px] border border-[#5596f5] checked:bg-[#5596f5]"
            />
            {hidden && (
              <Stroke className="pointer-events-none absolute inset-0 size-[14px] text-[#222]" width={3}>
                <path d="m4 12 5 5L20 6" />
              </Stroke>
            )}
          </span>
          默认隐藏
        </label>
        <p className="text-sm leading-[19px]">若默认隐藏一个时间点，那么只有在处于此时间点时，此时间点才会显示。</p>
        <hr className="mt-5 border-[#a5a5a5]" />
        <h2 className="mt-2 flex h-5 items-center gap-[7px] pl-px text-sm font-medium">
          <BookIcon className="size-[15px]" />
          默认课程
        </h2>
        <div className="mt-5">
          <Picker id="course" value="默认课程" />
        </div>
        <button className="ml-[18px] mt-2 flex h-5 items-center gap-1.5 text-sm font-medium text-[#5596f5]">
          <Icon name="upload" className="size-[14px]" />
          覆盖现有课程
        </button>
        <hr className="mt-[27px] border-[#a5a5a5]" />
        <h2 className="mb-[3px] mt-[7px] flex h-5 items-center gap-[7px] pl-px text-sm font-medium">
          <Icon name="cog" className="size-[15px]" />
          更多选项
        </h2>
        <OptionRow icon={<BellIcon className="size-[15px]" />} title="上课提醒设置" toggle />
        <OptionRow icon={<BookSearchIcon className="size-[15px]" />} title="课程显示设置" toggle />
        <OptionRow icon={<Icon name="cloud" className="size-[15px]" />} title="天气提醒设置" open />
        <div className="flex flex-col gap-2">
          <Picker id="alert" label="气象预警提醒模式" value="继承全局设置" />
          <Picker id="forecast" label="天气预报提醒模式" value="继承全局设置" />
        </div>
      </div>
      <div className="flex w-[17px] shrink-0 flex-col">
        <button aria-label="向上滚动" className="flex h-[17px] shrink-0 items-center justify-center bg-[#4b4b4b] text-[#777]">
          <ArrowIcon up className="size-3" />
        </button>
        <span className="h-20 shrink-0" />
        <span className="flex-1 bg-[#5d5d5d]" />
        <button aria-label="向下滚动" className="flex h-[17px] shrink-0 items-center justify-center bg-[#4b4b4b] text-[#777]">
          <ArrowIcon className="size-3" />
        </button>
      </div>
    </section>
  );
}

/* ---------- window ---------- */

function EditorWindow() {
  return (
    <main
      className={
        UI_FONT +
        " absolute bottom-20 left-[215px] right-[279px] top-[209px] flex flex-col border-x border-b border-[#1c7fd6] bg-[#303030] text-[#f0f0f0] shadow-[0_4px_14px_rgba(0,0,0,0.4)]"
      }
    >
      <div className="flex h-[30px] shrink-0 items-center bg-white pl-[9px] text-xs text-black">
        <AppLogo className="size-[14px]" />
        <span className="ml-[5px]">档案编辑</span>
        <div className="ml-auto flex h-full">
          <button aria-label="最小化" className="flex w-[46px] items-center justify-center">
            <svg viewBox="0 0 10 10" className="size-2.5" stroke="#000">
              <path d="M0 5.500h10" />
            </svg>
          </button>
          <button aria-label="最大化" className="flex w-[46px] items-center justify-center">
            <svg viewBox="0 0 10 10" className="size-2.5" stroke="#000" fill="none">
              <path d="M.5.5h9v9h-9z" />
            </svg>
          </button>
          <button aria-label="关闭" className="flex w-[46px] items-center justify-center">
            <svg viewBox="0 0 10 10" className="size-2.5" stroke="#000">
              <path d="m0 0 10 10M10 0 0 10" />
            </svg>
          </button>
        </div>
      </div>
      <Header />
      <div className="flex min-h-0 flex-1">
        <SidePanel />
        <span className="w-[5px] shrink-0 bg-[#424242]" />
        <div className="flex min-w-0 flex-1 flex-col">
          <div className="ml-1.5 flex h-[55px] shrink-0 items-center bg-[#222]">
            <ToolButton icon={<FilePlusIcon className="size-5" />}>上课</ToolButton>
            <ToolButton icon={<ClockPlusIcon className="size-5" />}>课间</ToolButton>
            <ToolButton icon={<DivideIcon className="size-5" />}>分割线</ToolButton>
            <ToolButton icon={<PlanePlusIcon className="size-5" />}>行动</ToolButton>
            <ToolDivider />
            <ToolButton icon={<Icon name="close" className="size-5" />}>删除</ToolButton>
            <ToolButton icon={<Icon name="refresh" className="size-5" />}>刷新</ToolButton>
            <ToolDivider />
            <ToolButton icon={<Icon name="info" className="size-5" />}>时间表信息</ToolButton>
            <ToolButton icon={<Icon name="trash" className="size-5" />}>删除时间表</ToolButton>
          </div>
          <div className="flex min-h-0 flex-1">
            <div className="flex min-w-0 flex-1 flex-col pt-px">
              <Timeline />
              <TimelineFooter />
            </div>
            <span className="w-[5px] shrink-0 bg-[#424242]" />
            <Inspector />
          </div>
        </div>
      </div>
    </main>
  );
}

/* ---------- taskbar ---------- */

function TaskButton({ label, state, children }: { label: string; state?: "open" | "active" | "multi"; children: React.ReactNode }) {
  return (
    <button
      aria-label={label}
      className={"relative flex w-[49px] items-center justify-center " + (state === "active" ? "bg-[#33444f]" : "")}
    >
      {children}
      {state && (
        <span
          className={
            "absolute bottom-0 h-0.5 bg-[#76b9ed] " +
            (state === "active" ? "inset-x-0" : state === "multi" ? "left-1 right-1 border-r-8 border-[#4e86b3]" : "inset-x-1")
          }
        />
      )}
    </button>
  );
}

function Taskbar() {
  return (
    <footer className={SYS_FONT + " flex h-10 shrink-0 bg-[#00141f] text-white"}>
      <button aria-label="开始" className="flex w-12 items-center justify-center">
        <svg viewBox="0 0 16 16" className="size-4" fill="#fff">
          <path d="M0 2.200 6.500 1.300v6.300H0zM7.300 1.200 16 0v7.600H7.300zM0 8.400h6.500v6.300L0 13.800zM7.300 8.400H16V16l-8.700-1.200z" />
        </svg>
      </button>
      <button aria-label="任务视图" className="flex w-12 items-center justify-center">
        <svg viewBox="0 0 20 16" className="h-4 w-5" fill="none" stroke="#fff">
          <path d="M4.500 1.500h11v13h-11zM3 3.500H.5v9H3M17 3.500h2.500v9H17" />
        </svg>
      </button>
      <div className="ml-0.5 flex">
        <TaskButton label="希沃视频展台">
          <CameraLogo id="c2" className="size-6" />
        </TaskButton>
        <TaskButton label="希沃白板">
          <EnLogo className="size-6" />
        </TaskButton>
        <TaskButton label="文件资源管理器">
          <svg viewBox="0 0 24 24" className="size-6">
            <path d="M1 3h8l2 2h12v15H1z" fill="#f4c84f" />
            <path d="M1 7h22v13H1z" fill="#ffe394" />
            <path d="M5 22v-7q0-2 2-2h10q2 0 2 2v7h-4v-5H9v5z" fill="#45b3ea" />
          </svg>
        </TaskButton>
        <TaskButton label="Microsoft Edge">
          <EdgeLogo id="e3" className="size-6" />
        </TaskButton>
        <TaskButton label="QQ" state="open">
          <QQLogo className="size-6" />
        </TaskButton>
        <TaskButton label="希沃白板 5" state="open">
          <EnLogo className="size-6" />
        </TaskButton>
        <TaskButton label="视频展台" state="open">
          <CameraLogo id="c3" className="size-6" />
        </TaskButton>
        <TaskButton label="PowerPoint" state="multi">
          <PptLogo className="size-6" />
        </TaskButton>
        <TaskButton label="档案编辑" state="active">
          <AppLogo className="size-6" />
        </TaskButton>
      </div>

      <div className="ml-auto flex items-stretch">
        <button aria-label="显示隐藏的图标" className="flex w-8 items-center justify-center">
          <svg viewBox="0 0 12 7" className="h-[7px] w-3" fill="none" stroke="#fff">
            <path d="m.5 6.500 5.500-5.500 5.500 5.500" />
          </svg>
        </button>
        <button aria-label="网络" className="flex w-8 items-center justify-center">
          <svg viewBox="0 0 17 15" className="h-[15px] w-[17px]" fill="none" stroke="#fff">
            <path d="M5 2.500h11.500v8H4.500V6M10.500 10.500V14M6 14h8M.5.5h4v4h-4zM2.500 4.500V10" />
          </svg>
        </button>
        <button aria-label="安全中心" className="flex w-8 items-center justify-center">
          <svg viewBox="0 0 16 16" className="size-4">
            <path d="M8 0c2 1.500 4 2 7 2 0 7-1 11-7 14C2 13 1 9 1 2c3 0 5-.500 7-2z" fill="#fff" />
            <path d="M8 1v14M1 7.500h14" stroke="#00141f" />
            <path d="m11.500 7 4.500 9H7z" fill="#fbb917" />
            <path d="M11.500 10v3M11.500 14v1" stroke="#222" />
          </svg>
        </button>
        <button aria-label="音量" className="flex w-[34px] items-center justify-center">
          <svg viewBox="0 0 17 14" className="h-3.5 w-[17px]" fill="none" stroke="#fff">
            <path d="M.5 4.500H3l3.500-3.500v12L3 9.500H.5zM9 5q1.500 2 0 4M11.500 3q3 4 0 8M14 1q4.500 6 0 12" />
          </svg>
        </button>
        <button aria-label="手写笔" className="flex w-10 items-center justify-center">
          <svg viewBox="0 0 16 16" className="size-4" fill="none" stroke="#fff" strokeWidth="1.200">
            <path d="M5 11 12 1.500q2-1 2.500 1L8 12l-3.500 2zM5 8C2 8 .5 11 1 13s3 2 5 1M9 6.500 12 8M11 12q2-3 4-2" />
          </svg>
        </button>
        <button aria-label="触摸键盘" className="flex w-8 items-center justify-center">
          <svg viewBox="0 0 23 13" className="h-[13px] w-[23px]" fill="none" stroke="#fff">
            <path d="M.5.5h22v12H.5z" />
            <path d="M3 4h17M3 6.500h17" strokeDasharray="1.500 1" />
            <path d="M3 9.500h2M7 9.500h9M18 9.500h2" />
          </svg>
        </button>
        <button aria-label="触摸板" className="flex w-[52px] items-center justify-center">
          <svg viewBox="0 0 15 12" className="h-3 w-[15px]" fill="none" stroke="#fff">
            <path d="M.5.5h14v11H.5zM.5 7.500h14M7.500 7.500v4" />
          </svg>
        </button>
        <button className="flex w-16 flex-col items-center justify-center whitespace-nowrap text-xs leading-[19px]">
          <time>18:07</time>
          <time>2025/9/12</time>
        </button>
        <button aria-label="通知" className="relative flex w-[52px] items-center justify-center pr-1">
          <svg viewBox="0 0 16 16" className="size-4">
            <path d="M0 1h16v11H7l-3 3.500V12H0z" fill="#fff" />
            <path d="M3 4.500h10M3 7h10M3 9.500h6" stroke="#00141f" />
          </svg>
          <span className="absolute bottom-1 right-3 flex size-4 items-center justify-center rounded-full border border-[#777] bg-[#2b3238] text-[11px] font-bold">1</span>
        </button>
        <button aria-label="显示桌面" className="w-[5px] border-l border-[#4a5a64]" />
      </div>
    </footer>
  );
}

function ImeBar() {
  return (
    <div className="absolute bottom-0 right-0 flex h-[22px] w-[152px] items-center border-b border-[#bbb] bg-white pl-1 text-[15px] leading-none text-black">
      <span className="h-5 border-l-2 border-dotted border-[#bbb]" />
      <span className="ml-1.5 flex size-4 items-center justify-center border border-[#666] text-[13px]">M</span>
      <span className="ml-[7px]">中</span>
      <svg viewBox="0 0 14 14" className="ml-1.5 size-3.5" fill="none" stroke="#000" strokeWidth="1.100">
        <path d="M7 1c5 1 7 6 3 10-3 2.500-7 2-9 0 5 0 8-4 6-10z" />
      </svg>
      <svg viewBox="0 0 14 14" className="ml-1.5 size-3.5">
        <circle cx="3" cy="3.500" r="2" fill="none" stroke="#000" />
        <path d="M8 7.500a2.300 2.300 0 1 1 4.500 1q-.500 3-4 4.500 2-2 1.500-3.500-2 0-2-2z" />
      </svg>
      <span className="ml-1">简</span>
      <Icon name="cog" className="ml-1.5 size-4" />
      <svg viewBox="0 0 6 10" className="ml-auto mr-1.5 h-2.5 w-1.5">
        <path d="M0 0h5v1.500H0zM0 6h6L3 9.500z" />
      </svg>
    </div>
  );
}

export default function App() {
  return (
    <div className="flex h-screen flex-col overflow-hidden">
      <div className={SYS_FONT + " relative flex-1 overflow-hidden bg-[radial-gradient(ellipse_70%_80%_at_45%_45%,#00a2f6_0%,#009aea_45%,#008bd6_80%,#0086cf_100%)]"}>
        <div className="flex pt-[7px]">
          <DesktopColumn items={COLUMN_ONE} />
          <DesktopColumn items={COLUMN_TWO} />
        </div>
        <ScheduleBar />

        <button className="absolute left-[607px] top-[129px] flex w-[76px] flex-col items-center">
          <span className="relative block h-[27px] w-12 bg-white">
            <svg viewBox="0 0 48 27" className="absolute inset-0">
              <path d="M4 2.500h7" stroke="#777" />
              <path d="M11 5h18M11 18h7" stroke="#d98a4a" />
              <path d="M11 7.500h16M11 10h17" stroke="#5b4bd0" />
              <path d="M11 12.500h18" stroke="#333" />
              <path d="M11 15h13" stroke="#e03030" />
            </svg>
            <PptLogo className="absolute bottom-0 right-0 size-4" />
          </span>
          <span className="mt-[3px] w-[76px] text-center text-xs leading-[17px] text-white [text-shadow:1px_1px_2px_#000,0_0_2px_#000a]">
            09.12 昼夜长
            <br />
            短的变化
          </span>
        </button>

        <p className="absolute bottom-[55px] left-[808px] text-[24px] font-bold leading-8 text-[#e4f6ff] font-['Liberation_Sans','Noto_Sans_CJK_SC',sans-serif]">
          全国服务热线 400-186-2505
        </p>

        <EditorWindow />

        <button aria-label="希沃白板" className="absolute bottom-[21px] left-[61px] flex size-[62px] items-center justify-center rounded-full border border-[#3a7fae] bg-[#173449]">
          <EnLogo muted className="size-8" />
        </button>
        <ImeBar />
      </div>
      <Taskbar />
    </div>
  );
}
